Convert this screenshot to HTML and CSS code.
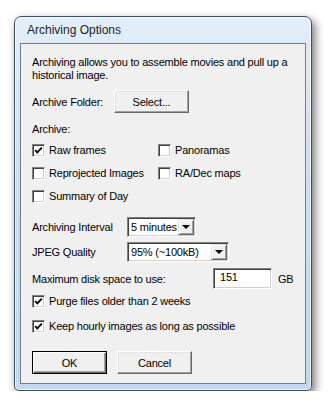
FILE: index.html
```html
<!doctype html>
<html lang="en">
<head>
    <meta charset="UTF-8">
    <title>Archiving Options</title>
    <link rel="stylesheet" href="styles.css">
</head>
<body>
    <div class="window">
        <div class="titlebar">Archiving Options</div>
        <div class="panel">
            <p class="intro">Archiving allows you to assemble movies and pull up a<br>historical image.</p>

            <div class="row folder-row">
                <span class="label folder-label">Archive Folder:</span>
                <button class="btn">Select...</button>
            </div>

            <div class="section-label">Archive:</div>

            <div class="check-grid">
                <label class="check"><span class="box checked"></span>Raw frames</label>
                <label class="check"><span class="box"></span>Panoramas</label>
                <label class="check"><span class="box"></span>Reprojected Images</label>
                <label class="check"><span class="box"></span>RA/Dec maps</label>
                <label class="check"><span class="box"></span>Summary of Day</label>
            </div>

            <div class="row interval-row">
                <span class="label select-label">Archiving Interval</span>
                <div class="combo combo-short">
                    <span class="combo-value">5 minutes</span>
                    <span class="combo-arrow"></span>
                </div>
            </div>

            <div class="row jpeg-row">
                <span class="label select-label">JPEG Quality</span>
                <div class="combo combo-long">
                    <span class="combo-value">95% (~100kB)</span>
                    <span class="combo-arrow"></span>
                </div>
            </div>

            <div class="row disk-row">
                <span class="label disk-label">Maximum disk space to use:</span>
                <div class="field">151</div>
                <span class="unit">GB</span>
            </div>

            <label class="check purge"><span class="box checked"></span>Purge files older than 2 weeks</label>
            <label class="check keep"><span class="box checked"></span>Keep hourly images as long as possible</label>

            <div class="row actions">
                <button class="btn btn-default">OK</button>
                <button class="btn">Cancel</button>
            </div>
        </div>
    </div>
</body>
</html>
```

FILE: styles.css
```css
body {
    margin: 0;
    padding: 16px 0 0 14px;
    background-color: #ffffff;
    font-family: 'Liberation Sans', Arial, sans-serif;
    font-size: 11px;
    letter-spacing: -0.2px;
    color: #000;
}
.window {
    box-sizing: border-box;
    width: 298px;
    height: 375px;
    padding: 0 5px 6px;
    border: 1px solid #3e4f63;
    border-radius: 7px 7px 5px 5px;
    background: linear-gradient(180deg, #e3eef9 0%, #cddff1 40%, #c2d8ee 100%);
    box-shadow: 3px 4px 10px rgba(0,0,0,0.55), inset 0 0 0 1px rgba(255,255,255,0.7);
}
.titlebar {
    height: 26px;
    line-height: 27px;
    padding-left: 7px;
    font-size: 12px;
    letter-spacing: 0;
    color: #1e1e1e;
}
.panel {
    box-sizing: border-box;
    height: 341px;
    padding: 12px 11px 0;
    border: 1px solid #6f7f8f;
    background-color: #f0f0f0;
    white-space: nowrap;
}
.intro {
    margin: 0;
    line-height: 13px;
}
.row {
    display: flex;
    align-items: center;
}
.folder-row {
    margin-top: 8px;
    height: 23px;
}
.folder-label { width: 82px; }
.select-label { width: 95px; }
.disk-label { width: 181px; }

.btn {
    box-sizing: border-box;
    width: 75px;
    height: 23px;
    padding: 0;
    font-family: inherit;
    font-size: 11px;
    letter-spacing: inherit;
    color: #000;
    background-color: #f0f0f0;
    border: 1px solid;
    border-color: #ffffff #696969 #696969 #ffffff;
    box-shadow: inset -1px -1px 0 #a0a0a0, inset 1px 1px 0 #e3e3e3;
}
.btn-default {
    border: 1px solid #000;
    box-shadow: inset 1px 1px 0 #ffffff, inset -1px -1px 0 #696969, inset -2px -2px 0 #a0a0a0;
}
.section-label {
    margin-top: 10px;
    line-height: 13px;
}
.check-grid {
    display: grid;
    grid-template-columns: 126px auto;
    grid-auto-rows: 13px;
    row-gap: 10px;
    margin-top: 8px;
}
.check {
    display: flex;
    align-items: center;
    height: 13px;
    line-height: 13px;
}
.box {
    box-sizing: border-box;
    width: 13px;
    height: 13px;
    margin-right: 4px;
    flex: none;
    background-color: #fff;
    border: 1px solid;
    border-color: #808080 #ffffff #ffffff #808080;
    box-shadow: inset 1px 1px 0 #404040, inset -1px -1px 0 #d4d0c8;
}
.box.checked {
    background: #fff url("data:image/svg+xml,%3Csvg xmlns='http://www.w3.org/2000/svg' width='13' height='13'%3E%3Cpath d='M3.2 6.2 L5.3 8.4 L9.8 3.6' fill='none' stroke='%23000' stroke-width='1.9'/%3E%3C/svg%3E") no-repeat -1px -1px;
}
.interval-row {
    margin-top: 14px;
    height: 20px;
}
.jpeg-row {
    margin-top: 5px;
    height: 20px;
}
.combo {
    box-sizing: border-box;
    display: flex;
    align-items: center;
    height: 20px;
    padding: 2px;
    background-color: #fff;
    border: 1px solid;
    border-color: #808080 #ffffff #ffffff #808080;
    box-shadow: inset 1px 1px 0 #404040, inset -1px -1px 0 #d4d0c8;
}
.combo-short { width: 69px; }
.combo-long { width: 102px; }
.combo-value {
    flex: 1;
    min-width: 0;
    overflow: hidden;
    padding-left: 1px;
    line-height: 14px;
}
.combo-arrow {
    box-sizing: border-box;
    position: relative;
    flex: none;
    width: 16px;
    height: 16px;
    margin: -1px -1px -1px 0;
    background-color: #f0f0f0;
    border: 1px solid;
    border-color: #e3e3e3 #696969 #696969 #e3e3e3;
    box-shadow: inset 1px 1px 0 #fff, inset -1px -1px 0 #a0a0a0;
}
.combo-arrow::after {
    content: "";
    position: absolute;
    left: 3px;
    top: 5px;
    border-left: 4px solid transparent;
    border-right: 4px solid transparent;
    border-top: 4px solid #000;
}
.disk-row {
    margin-top: 6px;
    height: 21px;
}
.field {
    box-sizing: border-box;
    width: 59px;
    height: 21px;
    padding-left: 6px;
    line-height: 17px;
    background-color: #fff;
    border: 1px solid;
    border-color: #808080 #ffffff #ffffff #808080;
    box-shadow: inset 1px 1px 0 #404040, inset -1px -1px 0 #d4d0c8;
}
.unit { margin-left: 6px; }
.purge { margin-top: 6px; }
.keep { margin-top: 12px; }
.actions {
    margin-top: 18px;
    gap: 10px;
}
```
